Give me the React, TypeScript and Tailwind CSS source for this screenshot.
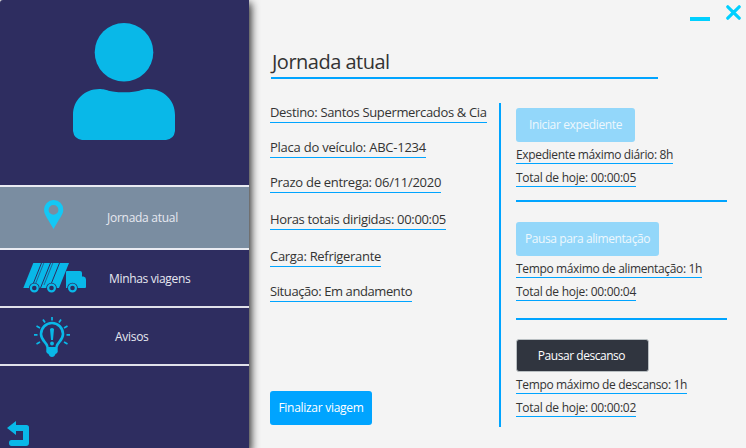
import type { ReactNode } from 'react';

function Avatar() {
  return (
    <svg className="ml-[73px] mt-[22px] block h-[119px] w-[102px]" viewBox="73 22 102 119" fill="#09b8e8">
      <circle cx="124" cy="52.2" r="29.3" />
      <path d="M73 115C73 100 84.500 89 99.500 89C107 89 108 92.300 124 92.300S141 89 148.500 89C163.500 89 175 100 175 115V131Q174 139 166 140H82Q74 139 73 131Z" />
    </svg>
  );
}

function Pin() {
  return (
    <svg className="block h-[30px] w-5" viewBox="0 0 20 30">
      <path fillRule="evenodd" fill="#14c8f5" d="M9.500 0A9.700 9.700 0 0 0 0 9.800C0 14 2.500 17 4.500 20.500L9.500 29L14.500 20.500C16.500 17 19.300 14 19.300 9.800A9.700 9.700 0 0 0 9.500 0ZM9.500 5A4.900 4.900 0 1 1 9.500 14.800A4.900 4.900 0 0 1 9.500 5Z" />
    </svg>
  );
}

function Truck() {
  return (
    <svg className="block h-[31px] w-[64px]" viewBox="23 263 64 31">
      <g fill="#09b8e8">
        <path d="M33.300 263H69L59 288H23.300Z" />
        <path d="M66 272Q66 271 67 271H80Q82 271 82 273V276.500H83.500Q86 277 86 279.500V287Q86 288 85 288H66Z" />
      </g>
      <g stroke="#2e2d60" strokeWidth="1">
        <path d="M41.500 263L31.500 288M50.500 263L40.500 288M59.500 263L49.500 288" />
        <path d="M43.800 263L35 285M52.800 263L44 285" strokeWidth="0.6" />
      </g>
      {[34.3, 51.5, 72.5].map((x) => (
        <g key={x}>
          <circle cx={x} cy="288" r="5.3" fill="#2e2d60" />
          <circle cx={x} cy="288" r="3.4" fill="none" stroke="#09b8e8" strokeWidth="2.2" />
        </g>
      ))}
    </svg>
  );
}

function Bulb() {
  return (
    <svg className="block h-[41px] w-[38px]" viewBox="33 316 38 41" fill="none" stroke="#09b8e8">
      <path strokeWidth="2.600" d="M47.500 347C47 342 41 341 41 334A11 11 0 0 1 63 334C63 341 57 342 56.500 347" />
      <path strokeWidth="1.700" d="M52 317V320.500M43 319.500L45 322.500M61 319.500L59 322.500M36.500 326L40 328M67.500 326L64 328M34 334.800H37.500M70 334.800H66.500M36.500 344L40 342M67.500 344L64 342" />
      <path fill="#09b8e8" stroke="none" d="M46.300 347H57.700V352Q57 353.500 55.500 354Q54.500 357 52 357T48.500 354Q47 353.500 46.300 352ZM50 329Q52 327 54 329L53 340H51Z" />
      <circle cx="52" cy="343.500" r="1.900" fill="#09b8e8" stroke="none" />
    </svg>
  );
}

function MenuItem({ icon, iconClass, labelClass, children }: { icon: ReactNode; iconClass: string; labelClass: string; children: string }) {
  return (
    <>
      <span className={`shrink-0 ${iconClass}`}>{icon}</span>
      <span className={`whitespace-nowrap text-[12px] leading-4 text-[#e6e8f0] ${labelClass}`}>{children}</span>
    </>
  );
}

function Field({ className, children }: { className: string; children: string }) {
  return (
    <div className={`h-5 shrink-0 whitespace-nowrap border-b border-[#00a4ff] text-[13px] leading-[19px] ${className}`}>
      {children}
    </div>
  );
}

function Info({ className, children }: { className: string; children: string }) {
  return (
    <div className={`h-[17px] shrink-0 whitespace-nowrap border-b border-[#00a4ff] text-[12px] leading-4 ${className}`}>
      {children}
    </div>
  );
}

function Button({ className, children }: { className: string; children: string }) {
  return (
    <button className={`flex shrink-0 items-center justify-center whitespace-nowrap rounded-[3px] text-[12px] leading-4 ${className}`}>
      {children}
    </button>
  );
}

export default function App() {
  return (
    <div className="relative flex h-[448px] w-[746px] overflow-hidden bg-[#f4f4f4] font-['Open_Sans','Noto_Sans',sans-serif] text-[#333333]">
      <aside className="flex w-[249px] shrink-0 flex-col rounded-tl-[3px] bg-[#2e2d60] shadow-[1px_4px_8px_1px_rgba(0,0,0,0.85)]">
        <div className="flex h-[185px] shrink-0 flex-col">
          <Avatar />
        </div>
        <div className="flex h-[63px] shrink-0 items-center border-t-2 border-[#e9ebf2] bg-[#7a8da1]">
          <MenuItem icon={<Pin />} iconClass="ml-[44px] -mt-[5px]" labelClass="ml-[43px] tracking-[-0.27px]">Jornada atual</MenuItem>
        </div>
        <div className="flex h-[58px] shrink-0 items-center border-t-2 border-[#e9ebf2]">
          <MenuItem icon={<Truck />} iconClass="ml-[23px]" labelClass="ml-[22px] mt-[2px] tracking-[-0.34px]">Minhas viagens</MenuItem>
        </div>
        <div className="flex h-[60px] shrink-0 items-center border-y-2 border-[#e0e1ea]">
          <MenuItem icon={<Bulb />} iconClass="ml-[33px] mt-[1px]" labelClass="ml-[44px] mt-[1px] tracking-[-0.3px]">Avisos</MenuItem>
        </div>
        <svg className="ml-[7px] mt-[55px] block h-[26px] w-[23px] shrink-0" viewBox="7 421 23 26" fill="#09b8e8">
          <path d="M7 428L16 421V425H26.500Q29 425 29 427.500V443Q29 446 26 446H11.500Q9 446 9 443T11.500 440H23V431H16V435Z" />
        </svg>
      </aside>

      <main className="ml-[21px] flex flex-col pt-[48px]">
        <h1 className="ml-px h-[31px] w-[387px] shrink-0 whitespace-nowrap border-b-2 border-[#00a4ff] pl-px text-[20px] leading-7 tracking-[-0.5px]">
          Jornada atual
        </h1>
        <div className="mt-6 flex h-[324px]">
          <section className="flex w-[229px] shrink-0 flex-col">
            <Field className="w-[217px] tracking-[-0.335px]">Destino: Santos Supermercados &amp; Cia</Field>
            <Field className="mt-[15px] w-[156px] tracking-[-0.24px]">Placa do veículo: ABC-1234</Field>
            <Field className="mt-[15px] w-[171px] tracking-[-0.28px]">Prazo de entrega: 06/11/2020</Field>
            <Field className="mt-[17px] w-[176px] tracking-[-0.33px]">Horas totais dirigidas: 00:00:05</Field>
            <Field className="mt-[17px] w-[111px] tracking-[-0.31px]">Carga: Refrigerante</Field>
            <Field className="mt-[15px] w-[142px] tracking-[-0.41px]">Situação: Em andamento</Field>
            <Button className="mt-[89px] h-[34px] w-[102px] bg-[#00a4ff] tracking-[-0.29px] text-white">Finalizar viagem</Button>
          </section>
          <section className="flex flex-col border-l-2 border-[#00a4ff] pl-[15px] pt-[5px]">
            <Button className="h-[34px] w-[119px] bg-[#93d7fa] tracking-[-0.37px] text-[#eef7fd]">Iniciar expediente</Button>
            <Info className="mt-[5px] w-[157px] tracking-[-0.35px]">Expediente máximo diário: 8h</Info>
            <Info className="mt-[6px] w-[120px] tracking-[-0.27px]">Total de hoje: 00:00:05</Info>
            <div className="mt-[13px] h-[2px] w-[211px] shrink-0 bg-[#00a4ff]" />
            <Button className="mt-5 h-[34px] w-[143px] bg-[#93d7fa] tracking-[-0.4px] text-[#eef7fd]">Pausa para alimentação</Button>
            <Info className="mt-[5px] w-[186px] tracking-[-0.35px]">Tempo máximo de alimentação: 1h</Info>
            <Info className="mt-[6px] w-[120px] tracking-[-0.27px]">Total de hoje: 00:00:04</Info>
            <div className="mt-[17px] h-[2px] w-[211px] shrink-0 bg-[#00a4ff]" />
            <Button className="mt-[19px] h-[33px] w-[133px] border border-[#b9bfc2] bg-[#30353f] pr-[2px] tracking-[-0.46px] text-white">Pausar descanso</Button>
            <Info className="mt-[5px] w-[171px] tracking-[-0.35px]">Tempo máximo de descanso: 1h</Info>
            <Info className="mt-[6px] w-[120px] tracking-[-0.27px]">Total de hoje: 00:00:02</Info>
          </section>
        </div>
      </main>

      <div className="absolute right-[5px] top-[5px] flex items-start gap-[16px]">
        <button aria-label="Minimizar" className="mt-[12px] h-1 w-5 bg-[#00d0ff]" />
        <button aria-label="Fechar" className="h-[15px] w-[15px]">
          <svg className="block h-full w-full" viewBox="0 0 15 15" stroke="#00d0ff" strokeWidth="3.200" strokeLinecap="round">
            <path d="M1.800 1.800L13.200 13.200M13.200 1.800L1.800 13.200" />
          </svg>
        </button>
      </div>
    </div>
  );
}
